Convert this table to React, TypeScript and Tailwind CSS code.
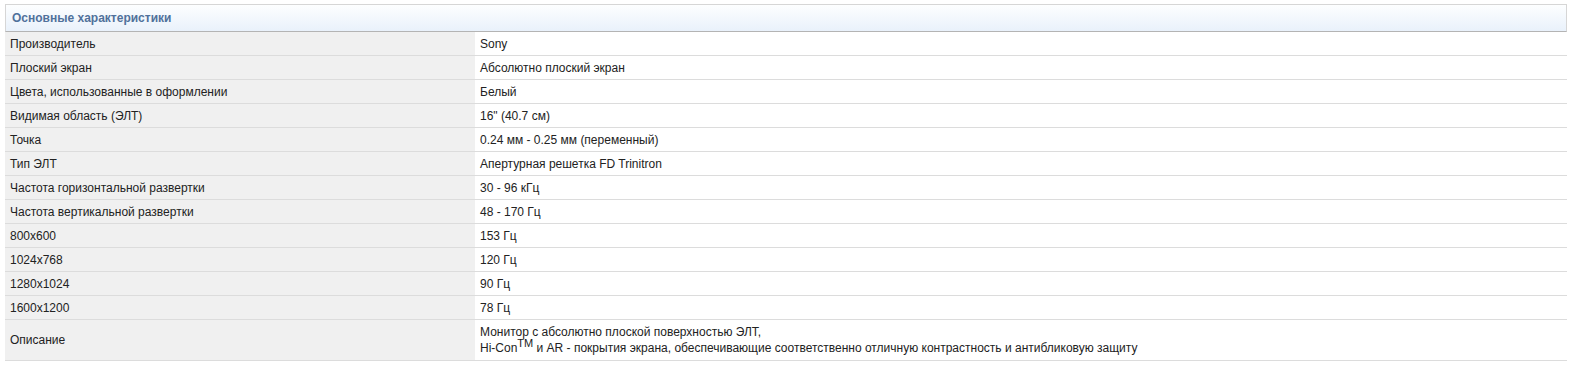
const rows: [string, React.ReactNode][] = [
    ["Производитель", "Sony"],
    ["Плоский экран", "Абсолютно плоский экран"],
    ["Цвета, использованные в оформлении", "Белый"],
    ["Видимая область (ЭЛТ)", "16\" (40.7 см)"],
    ["Точка", "0.24 мм - 0.25 мм (переменный)"],
    ["Тип ЭЛТ", "Апертурная решетка FD Trinitron"],
    ["Частота горизонтальной развертки", "30 - 96 кГц"],
    ["Частота вертикальной развертки", "48 - 170 Гц"],
    ["800x600", "153 Гц"],
    ["1024x768", "120 Гц"],
    ["1280x1024", "90 Гц"],
    ["1600x1200", "78 Гц"],
];

const App = () => {
    return (
        <div className="bg-white pt-[4px] pl-[5px] font-['Liberation_Sans',Arial,sans-serif] text-[12px] text-[#222]">
            <div className="w-[1562px]">
                <div className="flex h-[28px] items-center border border-b-[#b4b4b4] border-[#d6d6d6] bg-gradient-to-b from-[#fdfeff] to-[#e9f1fb] pl-[6px] font-bold text-[#50719b]">
                    Основные характеристики
                </div>

                {rows.map(([label, value]) => (
                    <div key={label} className="flex h-[24px] border-b border-[#dcdcdc]">
                        <div className="flex w-[470px] items-center bg-[#f0f0f0] pl-[5px]">{label}</div>
                        <div className="flex flex-1 items-center pl-[5px]">{value}</div>
                    </div>
                ))}

                <div className="flex border-b border-[#dcdcdc]">
                    <div className="flex w-[470px] items-center bg-[#f0f0f0] pl-[5px]">Описание</div>
                    <div className="flex-1 py-[4px] pl-[5px] leading-[16px]">
                        Монитор с абсолютно плоской поверхностью ЭЛТ,
                        <br />
                        Hi-Con<sup className="text-[11px]">TM</sup> и AR - покрытия экрана, обеспечивающие соответственно отличную контрастность и антибликовую защиту
                    </div>
                </div>
            </div>
        </div>
    );
};

export default App;
